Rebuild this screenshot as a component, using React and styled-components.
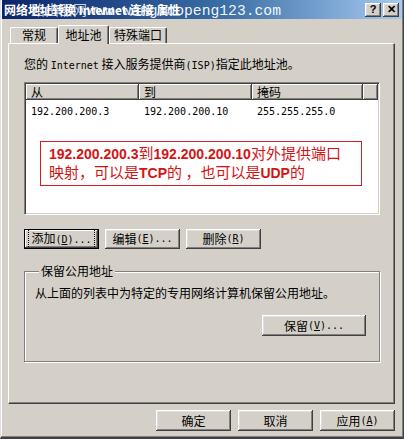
import React from 'react';
import styled, { createGlobalStyle } from 'styled-components';

const Global = createGlobalStyle`
  html, body { margin: 0; padding: 0; background: #d4d0c8; }
  body { font-family: "Noto Sans CJK SC", sans-serif; font-size: 12px; color: #000; }
  * { box-sizing: border-box; }
`;

const Win = styled.div`
  width: 404px;
  height: 439px;
  background: #d4d0c8;
  border-left: 1px solid #dfdfdf;
  border-right: 1px solid #404040;
  border-bottom: 2px solid #404040;
  box-shadow: inset -1px -1px #808080, inset 1px 0 #fff;
  display: flex;
  flex-direction: column;
  position: relative;
  overflow: hidden;
`;

const TitleBar = styled.div`
  height: 19px;
  margin: 0 1px 0 1px;
  background: linear-gradient(to right, #0a246a 0%, #3a6ea5 55%, #a6caf0 100%);
  display: flex;
  align-items: center;
  padding: 0 3px 0 2px;
  position: relative;
`;

const TitleText = styled.span`
  color: #fff;
  font-weight: bold;
  font-size: 12px;
  line-height: 14px;
  white-space: nowrap;
  flex: 1;
`;

const Watermark = styled.span`
  position: absolute;
  right: 121px;
  top: 0;
  color: rgba(255, 255, 255, 0.95);
  font-family: "Liberation Mono", monospace;
  font-size: 14.7px;
  line-height: 18px;
  white-space: nowrap;
  pointer-events: none;
`;

const WmCjk = styled.span`
  font-family: "Noto Sans CJK SC", sans-serif;
  font-size: 14px;
  opacity: 0.8;
`;

const CapBtns = styled.div`
  display: flex;
  gap: 2px;
`;

const CapBtn = styled.div`
  width: 16px;
  height: 14px;
  background: #d4d0c8;
  box-shadow: inset -1px -1px #404040, inset 1px 1px #fff, inset -2px -2px #808080, inset 2px 2px #dfdfdf;
  display: flex;
  align-items: center;
  justify-content: center;
  font-family: "Liberation Sans", sans-serif;
  font-weight: bold;
  font-size: 11px;
  line-height: 1;
  color: #000;
`;

const TabRow = styled.div`
  display: flex;
  align-items: flex-end;
  height: 24px;
  padding-left: 9px;
  position: relative;
  z-index: 1;
`;

const Tab = styled.div`
  width: ${p => p.$w}px;
  height: ${p => (p.$active ? 19 : 16)}px;
  margin-bottom: ${p => (p.$active ? -1 : 0)}px;
  background: #d4d0c8;
  border-top: 1px solid #fff;
  border-left: 1px solid #fff;
  border-right: 1px solid #404040;
  border-radius: 2px 2px 0 0;
  box-shadow: inset -1px 0 #808080;
  text-align: center;
  font-size: 12px;
  line-height: ${p => (p.$active ? 16 : 14)}px;
  padding-top: ${p => (p.$active ? 1 : 0)}px;
  white-space: nowrap;
`;

const Panel = styled.div`
  margin: 0 8px 0 7px;
  height: 361px;
  border-top: 1px solid #fff;
  border-left: 1px solid #fff;
  border-right: 1px solid #404040;
  border-bottom: 1px solid #404040;
  box-shadow: inset -1px -1px #808080;
  padding: 12px 0 0 15px;
  display: flex;
  flex-direction: column;
`;

const Line = styled.div`
  font-size: 12px;
  line-height: 16px;
  white-space: nowrap;
`;

const Lat = styled.span`
  font-family: "DejaVu Sans Mono", "Liberation Mono", monospace;
  font-size: 10px;
`;

const ListView = styled.div`
  margin-top: 8px;
  width: 356px;
  height: 133px;
  background: #fff;
  border-top: 1px solid #808080;
  border-left: 1px solid #808080;
  border-right: 1px solid #fff;
  border-bottom: 1px solid #fff;
  box-shadow: inset 1px 1px #404040, inset -1px -1px #d4d0c8;
  padding: 1px;
  position: relative;
`;

const HeaderRow = styled.div`
  display: flex;
  height: 16px;
`;

const HeadCell = styled.div`
  width: ${p => (p.$w ? `${p.$w}px` : 'auto')};
  flex: ${p => (p.$w ? 'none' : '1')};
  height: 16px;
  background: #d4d0c8;
  box-shadow: inset -1px -1px #404040, inset 1px 1px #fff, inset -2px -2px #808080;
  padding-left: 5px;
  font-size: 12px;
  line-height: 15px;
`;

const Row = styled.div`
  display: flex;
  height: 16px;
  margin-top: 2px;
`;

const Cell = styled.div`
  width: ${p => p.$w}px;
  padding-left: 5px;
  line-height: 16px;
  white-space: nowrap;
`;

const Note = styled.div`
  position: absolute;
  left: 15px;
  top: 58px;
  width: 322px;
  height: 45px;
  border: 1px solid #d42020;
  padding: 2px 0 0 8px;
  color: #d41414;
  font-size: 15px;
  line-height: 18px;
  white-space: nowrap;
`;

const NoteNum = styled.span`
  font-family: "Liberation Sans", Arial, sans-serif;
  font-weight: bold;
  font-size: 14px;
`;

const BtnRow = styled.div`
  display: flex;
  gap: ${p => p.$gap || 6}px;
  margin-top: ${p => p.$mt || 0}px;
  justify-content: ${p => (p.$end ? 'flex-end' : 'flex-start')};
`;

const Btn = styled.div`
  width: ${p => p.$w || 75}px;
  height: ${p => p.$h || 20}px;
  background: #d4d0c8;
  box-shadow: ${p =>
    p.$default
      ? 'inset 0 0 0 1px #000, inset -2px -2px #404040, inset 2px 2px #fff, inset -3px -3px #808080'
      : 'inset -1px -1px #404040, inset 1px 1px #fff, inset -2px -2px #808080, inset 2px 2px #dfdfdf'};
  display: flex;
  align-items: center;
  justify-content: center;
  font-size: 12px;
  line-height: 14px;
  white-space: nowrap;
  position: relative;
`;

const Focus = styled.span`
  padding: 0 1px;
  outline: 1px dotted #000;
  outline-offset: 1px;
`;

const U = styled.span`
  text-decoration: underline;
`;

const Group = styled.fieldset`
  margin: 16px 0 0 0;
  width: 356px;
  height: 97px;
  padding: 8px 13px 0 10px;
  border: 1px solid #808080;
  box-shadow: 1px 1px 0 #fff, inset 1px 1px 0 #fff;
  display: flex;
  flex-direction: column;
  min-inline-size: 0;
`;

const Legend = styled.legend`
  padding: 0 2px;
  margin-left: 4px;
  font-size: 12px;
  line-height: 12px;
  background: #d4d0c8;
`;

const Footer = styled.div`
  display: flex;
  justify-content: flex-end;
  gap: 7px;
  padding: 6px 8px 0 0;
`;

const App = () => (
  <>
    <Global />
    <Win>
      <TitleBar>
        <TitleText>网络地址转换 Internet 连接 属性</TitleText>
        <Watermark>
          <WmCjk>路由器网</WmCjk>www.wangluopeng123.com
        </Watermark>
        <CapBtns>
          <CapBtn>?</CapBtn>
          <CapBtn>✕</CapBtn>
        </CapBtns>
      </TitleBar>
      <TabRow>
        <Tab $w={48}>常规</Tab>
        <Tab $w={51} $active>地址池</Tab>
        <Tab $w={58}>特殊端口</Tab>
      </TabRow>
      <Panel>
        <Line>
          您的 <Lat>Internet</Lat> 接入服务提供商<Lat>(ISP)</Lat>指定此地址池。
        </Line>
        <ListView>
          <HeaderRow>
            <HeadCell $w={113}>从</HeadCell>
            <HeadCell $w={113}>到</HeadCell>
            <HeadCell $w={111}>掩码</HeadCell>
            <HeadCell />
          </HeaderRow>
          <Row>
            <Cell $w={113}><Lat>192.200.200.3</Lat></Cell>
            <Cell $w={113}><Lat>192.200.200.10</Lat></Cell>
            <Cell $w={111}><Lat>255.255.255.0</Lat></Cell>
          </Row>
          <Note>
            <div>
              <NoteNum>192.200.200.3</NoteNum>到<NoteNum>192.200.200.10</NoteNum>对外提供端口
            </div>
            <div>
              映射，可以是<NoteNum>TCP</NoteNum>的 ，也可以是<NoteNum>UDP</NoteNum>的
            </div>
          </Note>
        </ListView>
        <BtnRow $mt={14} $gap={6}>
          <Btn $default $w={75}>
            <Focus>添加<Lat>(<U>D</U>)...</Lat></Focus>
          </Btn>
          <Btn $w={75}>编辑 <Lat>(<U>E</U>)...</Lat></Btn>
          <Btn $w={75}>删除 <Lat>(<U>R</U>)</Lat></Btn>
        </BtnRow>
        <Group>
          <Legend>保留公用地址</Legend>
          <Line>从上面的列表中为特定的专用网络计算机保留公用地址。</Line>
          <BtnRow $mt={14} $end>
            <Btn $w={104} $h={21}>保留 <Lat>(<U>V</U>)...</Lat></Btn>
          </BtnRow>
        </Group>
      </Panel>
      <Footer>
        <Btn $w={75} $h={21}>确定</Btn>
        <Btn $w={75} $h={21}>取消</Btn>
        <Btn $w={75} $h={21}>应用 <Lat>(<U>A</U>)</Lat></Btn>
      </Footer>
    </Win>
  </>
);

export default App;
